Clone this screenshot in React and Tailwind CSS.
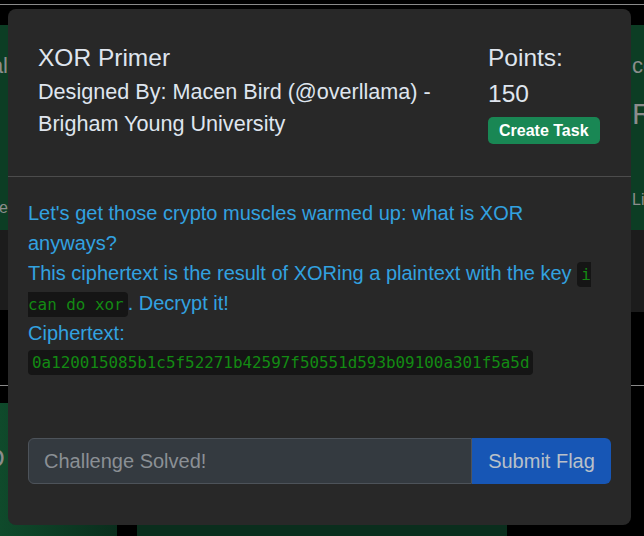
import React from 'react';

// Background page (dimmed behind the modal)
function PageBehind() {
  return (
    <div className="flex h-full flex-col">
      <div className="pt-[4px]">
        <div className="h-px bg-[#8a8a8a]" />
      </div>
      <div className="mt-[20px] flex justify-between">
        <div className="-ml-[192px] w-[200px]">
          <div className="flex h-[205px] flex-col items-end bg-[#0c3d24] text-[#8c8c8c]">
            <div className="mt-[27px] text-[22px] leading-[28px]">nal</div>
            <div className="mt-[118px] text-[16px] leading-[20px]">ope</div>
          </div>
          <div className="h-[80px] bg-[#1c1c1c]" />
        </div>
        <div className="-mr-[187px] w-[200px]">
          <div className="flex h-[205px] flex-col bg-[#0c3d24] pl-[1px] text-[#8c8c8c]">
            <div className="mt-[27px] text-[22px] leading-[28px]">co</div>
            <div className="mt-[16px] text-[30px] leading-[36px]">RS</div>
            <div className="mt-[58px] text-[16px] leading-[20px]">Lis</div>
          </div>
          <div className="h-[82px] bg-[#1c1c1c]" />
        </div>
      </div>
      <div className="mt-[73px] h-px bg-[#8a8a8a]" />
      <div className="mt-[17px] flex flex-1 gap-[20px]">
        <div className="flex w-[117px] items-start justify-start bg-gradient-to-r from-[#0f4a2b] to-[#0a2e1d] text-[#8c8c8c]">
          <div className="-ml-[14px] mt-[40px] text-[26px] leading-[30px]">D</div>
        </div>
        <div className="w-[370px] bg-[#0a2e1d]" />
      </div>
    </div>
  );
}

function Code({ children }) {
  return (
    <code className="rounded-[4px] bg-[#151515] px-[4px] py-[3px] font-['DejaVu_Sans_Mono',monospace] text-[#138a13] [box-decoration-break:slice]">
      {children}
    </code>
  );
}

function ChallengeModal() {
  return (
    <div className="absolute left-[8px] top-[9px] flex h-[516px] w-[623px] flex-col rounded-[8px] bg-[#282828]">
      <div className="flex h-[168px] border-b border-[#4c4c4c] px-[30px] pt-[31px] text-[#dfe5ee]">
        <div className="w-[450px]">
          <div className="text-[24.5px] leading-[36px]">XOR Primer</div>
          <div className="w-[420px] text-[21.6px] leading-[32px]">
            Designed By: Macen Bird (@overllama) - Brigham Young University
          </div>
        </div>
        <div className="flex flex-col items-start">
          <div className="text-[24.5px] leading-[36px]">Points:</div>
          <div className="text-[24.5px] leading-[36px]">150</div>
          <button className="mt-[5px] h-[27px] rounded-[5px] bg-[#198754] px-[11px] text-[16px] font-bold leading-[27px] text-white">
            Create Task
          </button>
        </div>
      </div>

      <div className="px-[20px] pt-[21px] text-[20px] leading-[30px] text-[#32a2e0]">
        <p>Let's get those crypto muscles warmed up: what is XOR anyways?</p>
        <p>
          This ciphertext is the result of XORing a plaintext with the key{' '}
          <span className="text-[15.9px] leading-[20px]">
            <Code>i can do xor</Code>
          </span>
          . Decrypt it!
        </p>
        <p>Ciphertext:</p>
        <p className="text-[15.9px]">
          <Code>0a120015085b1c5f52271b42597f50551d593b09100a301f5a5d</Code>
        </p>
      </div>

      <div className="mt-auto flex px-[20px] pb-[41px]">
        <input
          className="h-[46px] flex-1 rounded-l-[6px] border border-[#4d535a] bg-[#343a40] px-[15px] text-[20px] text-[#dee2e6] outline-none placeholder:text-[#8b9095]"
          placeholder="Challenge Solved!"
          disabled
        />
        <button className="h-[46px] w-[139px] rounded-r-[6px] bg-[#1756b5] text-[20px] text-[#b9c0c9]">
          Submit Flag
        </button>
      </div>
    </div>
  );
}

export default function App() {
  return (
    <div className="relative h-[536px] w-[644px] overflow-hidden bg-black font-['Liberation_Sans',Arial,sans-serif]">
      <PageBehind />
      <ChallengeModal />
    </div>
  );
}
